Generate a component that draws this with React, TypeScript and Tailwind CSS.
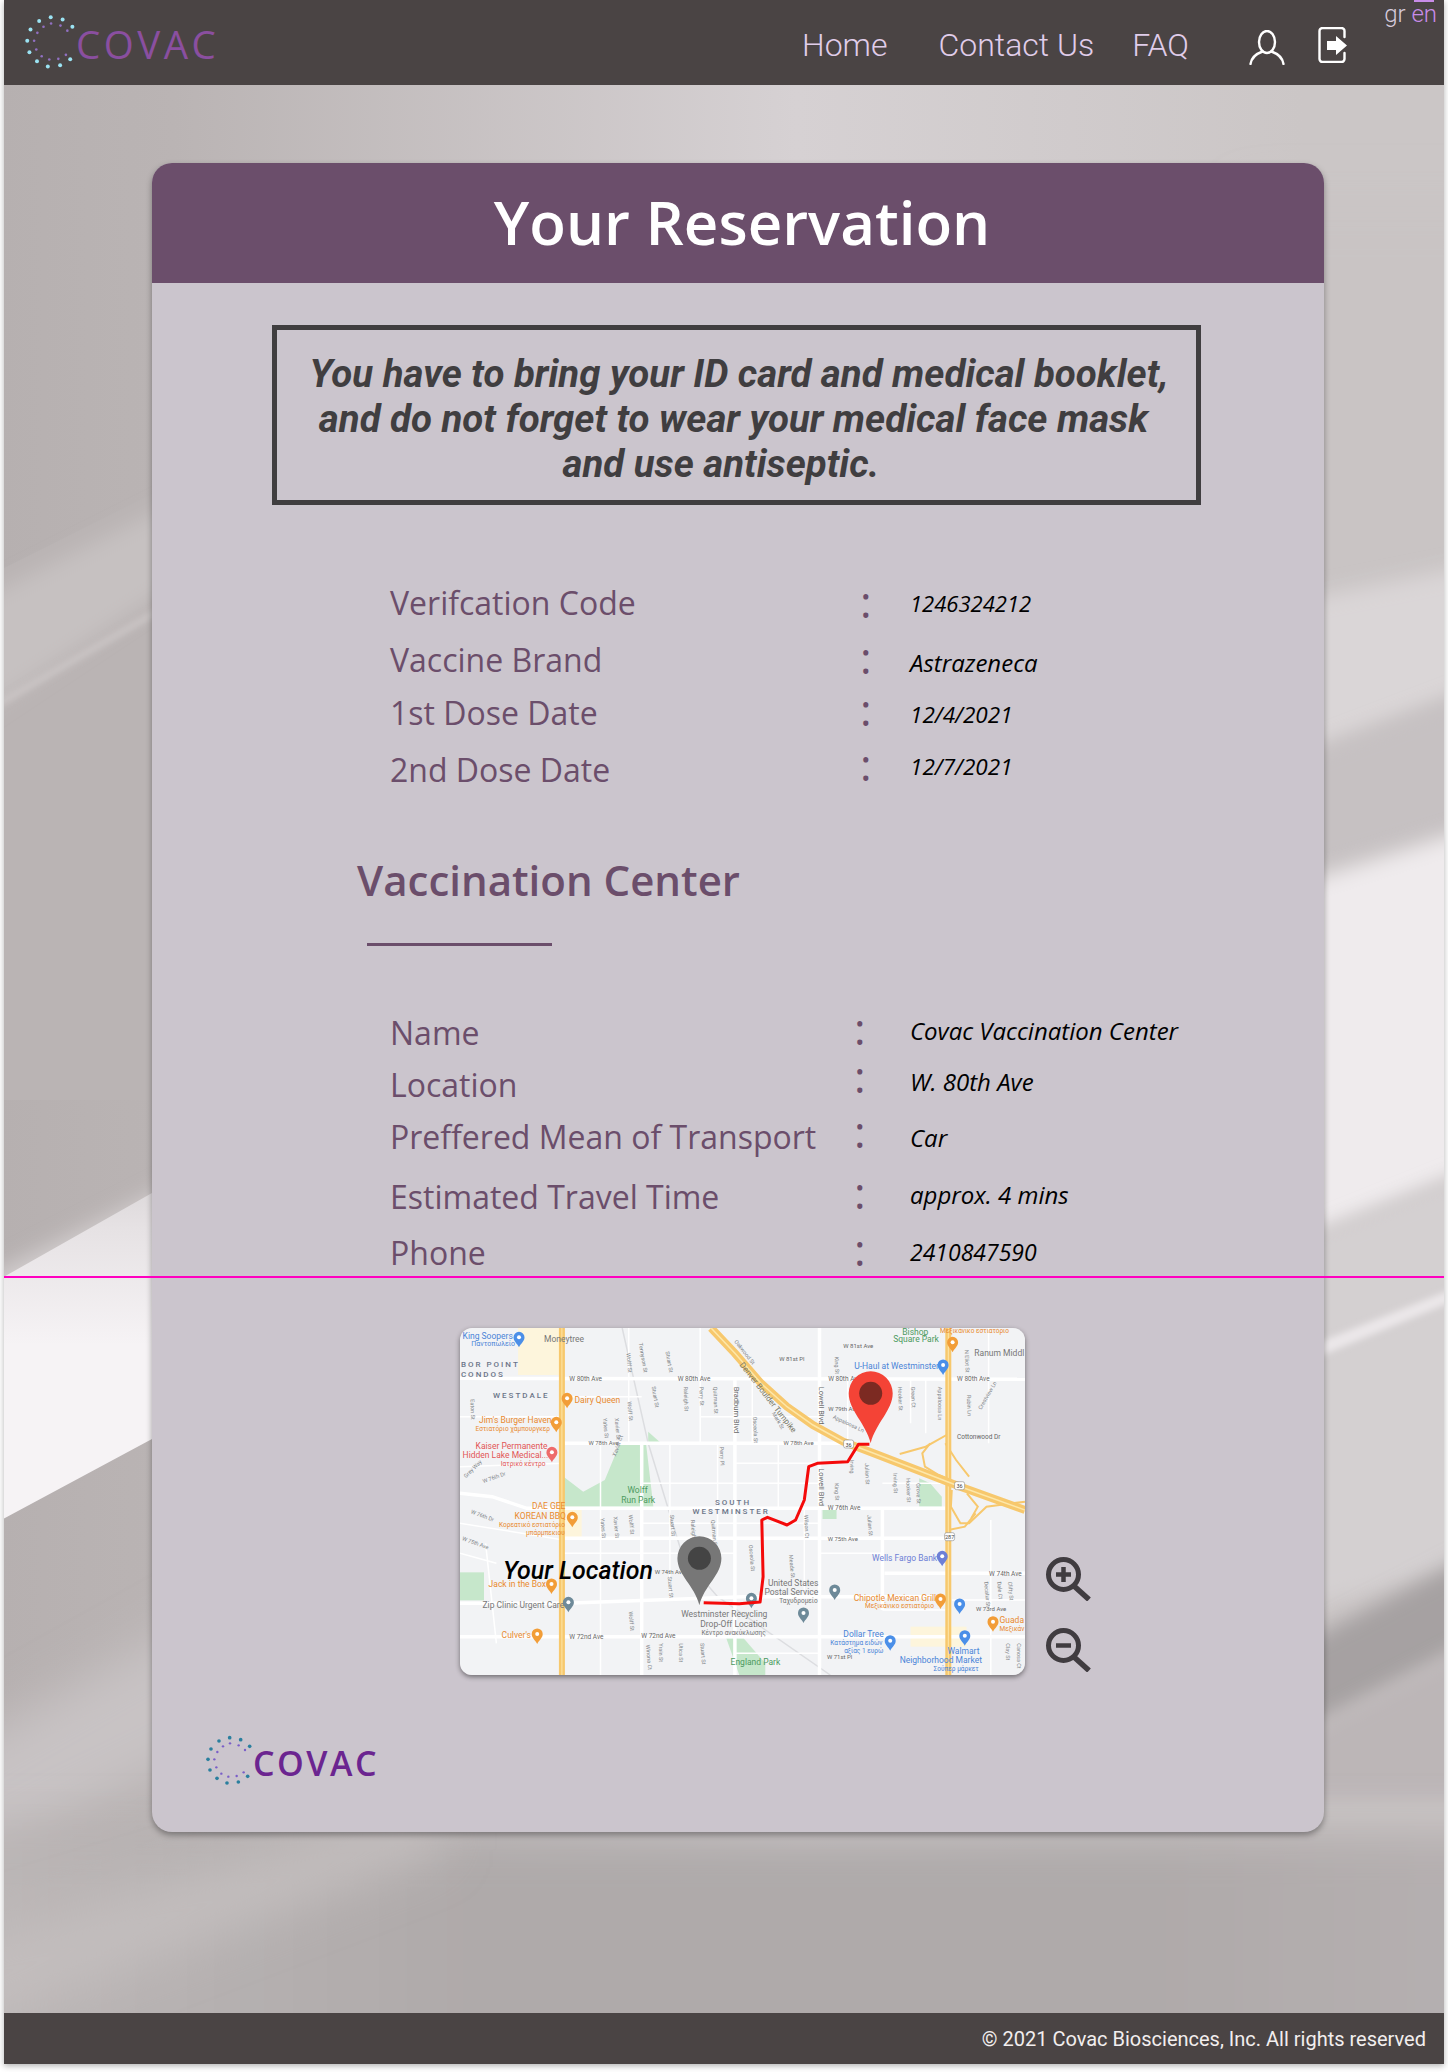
import React from 'react'

const X = (z: number) => (z - 46) / 2.306
const Y = (z: number) => (z - 54) / 3
const line = (pts: number[][]) => pts.map((p, i) => `${i ? 'L' : 'M'}${X(p[0]).toFixed(1)} ${Y(p[1]).toFixed(1)}`).join(' ')

const outerDots = [[269,116],[302,122],[329,142],[237,126],[213,150],[204,181],[210,213],[231,238],[261,252],[295,249],[323,232]]
const innerDots = [[270,133],[296,139],[315,153],[249,142],[232,159],[223,181],[229,205],[244,224],[265,233],[290,231],[311,220]]

const DotRing = ({ outer, inner, className }: { outer: string, inner: string, className: string }) => (
  <svg viewBox="195 108 144 150" className={className}>
    {outerDots.map((d, i) => <circle key={i} cx={d[0]} cy={d[1]} r="5.5" fill={outer} />)}
    {innerDots.map((d, i) => <circle key={i} cx={d[0]} cy={d[1]} r="3.6" fill={inner} />)}
  </svg>
)

const UserIcon = () => (
  <svg width="36" height="35" viewBox="0 0 36 35" fill="none" stroke="#fff" strokeWidth="2.4" strokeLinecap="round" className="mt-[10px]">
    <ellipse cx="18" cy="12" rx="8" ry="11" />
    <path d="M1.5 34C2.5 27 8 23.5 13.5 21.5M34.5 34C33.5 27 28 23.5 22.5 21.5" />
  </svg>
)

const ExitIcon = () => (
  <svg width="30" height="36" viewBox="0 0 30 36" fill="none" className="mt-[5px]">
    <path d="M26.5 10V4a3 3 0 0 0-3-3H4.500a3 3 0 0 0-3 3v28a3 3 0 0 0 3 3h19a3 3 0 0 0 3-3v-6" stroke="#fff" strokeWidth="2.4" strokeLinecap="round" />
    <path d="M9 14h9V9l11 9.500L18 28v-5H9z" fill="#fff" />
  </svg>
)

const ZoomIcon = ({ plus }: { plus?: boolean }) => (
  <svg width="46" height="44" viewBox="0 0 46 44" fill="none" stroke="#403c40" strokeWidth="5">
    <circle cx="18.500" cy="17.500" r="15" />
    <path d="M29 29l15 13.500" strokeWidth="5.500" />
    <path d={plus ? 'M11 17.500h15M18.500 10v15' : 'M11 17.500h15'} strokeWidth="4.500" />
  </svg>
)

const BackgroundArt = () => (
  <svg className="absolute inset-0 w-full h-full" viewBox="4 85 1440 1928" preserveAspectRatio="none">
    <defs>
      <linearGradient id="base" x1="0" y1="0" x2="1" y2="0">
        <stop offset="0" stopColor="#b6b0b0" />
        <stop offset="0.12" stopColor="#bab4b4" />
        <stop offset="0.55" stopColor="#d6d1d3" />
        <stop offset="0.9" stopColor="#cbc6c6" />
        <stop offset="1" stopColor="#cbc6c6" />
      </linearGradient>
      <linearGradient id="lower" x1="0" y1="0" x2="1" y2="0">
        <stop offset="0" stopColor="#bfbaba" />
        <stop offset="0.35" stopColor="#afaaaa" />
        <stop offset="0.75" stopColor="#afaaaa" />
        <stop offset="1" stopColor="#b8b2b3" />
      </linearGradient>
      <linearGradient id="band" x1="0" y1="0" x2="0" y2="1">
        <stop offset="0" stopColor="#c6c1c3" />
        <stop offset="0.3" stopColor="#e6e2e4" />
        <stop offset="0.55" stopColor="#f6f3f5" />
        <stop offset="1" stopColor="#f6f3f5" />
      </linearGradient>
      <filter id="b3" x="-30%" y="-30%" width="160%" height="160%"><feGaussianBlur stdDeviation="3" /></filter>
      <filter id="b10" x="-30%" y="-30%" width="160%" height="160%"><feGaussianBlur stdDeviation="10" /></filter>
      <filter id="b24" x="-30%" y="-30%" width="160%" height="160%"><feGaussianBlur stdDeviation="24" /></filter>
    </defs>
    <rect x="0" y="85" width="1448" height="1928" fill="url(#base)" />
    <path d="M-60 600L300 420V1100H-60z" fill="#bab4b4" />
    <path d="M-60 620L300 440V500L-60 740z" fill="#c6c1c1" filter="url(#b10)" />
    <path d="M-60 735L300 525L300 531L-60 741z" fill="#cdc8c8" filter="url(#b3)" />
    <path d="M-60 1300L300 1120V1180L-60 1350z" fill="#d2cdce" filter="url(#b10)" />
    <path d="M-60 1760L300 1560V1700L-60 1880z" fill="#c8c3c4" filter="url(#b24)" />
    <path d="M-60 1313L152 1193L420 1090V1300L152 1439L-60 1553z" fill="url(#band)" />
    <path d="M1250 200H1500V600L1250 660z" fill="#c9c4c4" filter="url(#b24)" />
    <path d="M1250 610L1500 560V680L1250 775z" fill="#dad6d7" filter="url(#b10)" />
    <path d="M1250 775L1500 680V820L1250 890z" fill="#c6c1c2" filter="url(#b10)" />
    <path d="M1250 900L1500 820L1500 1160L1250 1260z" fill="#efebed" filter="url(#b10)" />
    <path d="M1250 1260L1500 1160V1560L1250 1620z" fill="#d4d0d1" filter="url(#b10)" />
    <path d="M1250 1370L1500 1270V1282L1250 1385z" fill="#ebe7e9" filter="url(#b3)" />
    <path d="M1250 1670L1500 1540V1630L1250 1760z" fill="#a6a1a2" filter="url(#b10)" />
    <path d="M1250 1760L1500 1630V1800H1250z" fill="#bcb6b7" filter="url(#b10)" />
    <rect x="-150" y="1830" width="1750" height="350" fill="url(#lower)" filter="url(#b24)" />
    <path d="M-60 1950L440 1800V1850L-60 2040z" fill="#c2bdbd" filter="url(#b24)" />
  </svg>
)

const thinRoads = [
  [[370,400],[370,1095]], [[435,54],[435,400]], [[530,400],[530,860]], [[600,54],[600,400]], [[640,400],[640,690]],
  [[720,205],[720,400]], [[780,400],[780,595]], [[840,595],[840,860]], [[940,205],[940,400]], [[1085,205],[1085,340]],
  [[1120,205],[1120,370]], [[1265,54],[1265,400]], [[1270,630],[1270,1095]], [[285,260],[465,260]], [[600,320],[875,320]],
  [[680,460],[875,460]], [[465,520],[875,520]], [[465,640],[875,640]], [[875,730],[1020,730]], [[285,730],[680,730]],
  [[680,1030],[875,1030]], [[1020,520],[1165,520]], [[1180,870],[1349,870]], [[46,640],[285,690]], [[46,730],[130,760]],
  [[1020,900],[1165,900]], [[285,460],[46,470]], [[46,320],[285,320]], [[105,700],[130,1000]],
]

const mainRoads = [
  [[46,205],[1349,208]], [[285,400],[930,400]], [[46,550],[120,560],[200,595],[1165,595]], [[285,685],[1165,685]],
  [[1025,790],[1349,790]], [[46,880],[290,880],[700,860],[1165,860]], [[46,980],[1349,980]], [[875,54],[875,1095]],
  [[680,205],[680,1095]], [[465,400],[465,1095]], [[1020,595],[1020,900]],
]

type MapLabel = [number, number, string, string, number?]

const mapLabels: MapLabel[] = [
  [52,86,'King Soopers','#4a84d8'], [72,108,'Παντοπωλείο','#4a84d8',7], [240,95,'Moneytree','#777'],
  [48,170,'BOR POINT','#6b7588',8], [48,200,'CONDOS','#6b7588',8], [122,265,'WESTDALE','#6b7588',8],
  [310,280,'Dairy Queen','#e98a2f'], [90,340,'Jim\'s Burger Haven','#e98a2f'], [82,362,'Εστιατόριο χάμπουργκερ','#e98a2f',6.500],
  [82,418,'Kaiser Permanente','#e25555'], [52,445,'Hidden Lake Medical...','#e25555'], [140,468,'Ιατρικό κέντρο','#e25555',6.500],
  [212,598,'DAE GEE','#e98a2f'], [172,626,'KOREAN BBQ','#e98a2f'], [136,650,'Κορεατικό εστιατόριο','#e98a2f',6.500], [198,674,'μπάρμπεκιου','#e98a2f',6.500],
  [432,550,'Wolff','#4c9a5e'], [418,578,'Run Park','#4c9a5e'], [634,584,'SOUTH','#6b7588',8], [582,612,'WESTMINSTER','#6b7588',8],
  [112,832,'Jack in the Box','#e98a2f'], [98,895,'Zip Clinic Urgent Care','#777'], [142,985,'Culver\'s','#e98a2f'],
  [556,922,'Westminster Recycling','#777'], [600,950,'Drop-Off Location','#777'], [603,974,'Κέντρο ανακύκλωσης','#777',6.500],
  [756,828,'United States','#777'], [748,856,'Postal Service','#777'], [782,880,'Ταχυδρομείο','#777',6.500],
  [954,872,'Chipotle Mexican Grill','#e98a2f'], [980,895,'Μεξικάνικο εστιατόριο','#e98a2f',6.500],
  [996,754,'Wells Fargo Bank','#6d7fd6'], [930,982,'Dollar Tree','#4a84d8'], [900,1005,'Κατάστημα ειδών','#4a84d8',6.500], [932,1028,'αξίας 1 ευρώ','#4a84d8',6.500],
  [1170,1032,'Walmart','#4a84d8'], [1060,1060,'Neighborhood Market','#4a84d8'], [1138,1084,'Σούπερ μάρκετ','#4a84d8',6.500],
  [670,1064,'England Park','#4c9a5e'], [955,178,'U-Haul at Westminster','#4a84d8'], [1232,138,'Ranum Middl','#777'],
  [1066,76,'Bishop','#4c9a5e'], [1045,96,'Square Park','#4c9a5e'], [1153,70,'Μεξικάνικο εστιατόριο','#e98a2f',6.500], [1290,938,'Guada','#e98a2f'], [1290,962,'Μεξικάν','#e98a2f',6.500],
  [298,214,'W 80th Ave','#666',6.500], [548,212,'W 80th Ave','#666',6.500], [895,212,'W 80th Ave','#666',6.500], [1192,214,'W 80th Ave','#666',6.500],
  [342,404,'W 78th Ave','#666',6], [792,406,'W 78th Ave','#666',6], [894,600,'W 76th Ave','#666',6.500], [894,692,'W 75th Ave','#666',6],
  [1266,797,'W 74th Ave','#666',6.500], [298,986,'W 72nd Ave','#666',6.500], [464,984,'W 72nd Ave','#666',6.500], [892,1046,'W 71st Pl','#666',6],
  [1192,386,'Cottonwood Dr','#666',6.500], [1236,902,'W 73rd Ave','#666',6], [495,792,'W 74th Ave','#666',6],
  [930,114,'W 81st Ave','#666',6], [782,154,'W 81st Pl','#666',6], [895,302,'W 79th Ave','#666',6],
]

// little street names that run along the roads: [x, y, name, rotation]
const streetLabels: [number, number, string, number][] = [
  [458,100,'Tennyson St',80], [520,125,'Stuart St',80], [488,230,'Stuart St',80], [562,230,'Raleigh St',88], [598,230,'Perry St',88],
  [630,230,'Quitman St',88], [430,130,'Wolff St',85], [432,275,'Wolff St',85], [403,325,'Xavier St',85], [376,325,'Yates St',85],
  [70,268,'Eaton St',88], [1056,230,'Hooker St',88], [1086,230,'Green Ct',88], [1148,230,'Appaloosa Ln',90], [1215,255,'Rubin Ln',88],
  [1248,300,'Crestview Ln',-60], [980,460,'Julian St',88], [945,450,'Irving',88], [910,520,'King St',88], [1045,490,'Irving St',88],
  [1075,505,'Hooker St',88], [1098,520,'Grove St',88], [645,410,'Perry Pl',88], [722,320,'Osceola St',88], [765,310,'Mark St',60],
  [840,615,'Wilson Ct',88], [805,735,'Meade St',85], [712,705,'Osceola St',85], [530,615,'Stuart St',85], [578,630,'Raleigh St',85],
  [625,630,'Quitman St',85], [370,625,'Yates St',85], [400,620,'Xavier St',85], [435,615,'Wolff St',85], [985,615,'Julian St',85],
  [435,905,'Wolff St',85], [525,800,'Stuart St',85], [552,1000,'Utica St',90], [505,1000,'Yrain St',90], [475,1005,'Winona Ct',85],
  [600,1000,'Stuart St',85], [910,140,'King St',88], [1210,120,'N Eliot St',88], [1255,815,'Decatur St',85], [1285,815,'Dale Ct',85],
  [1310,815,'Clifty St',85], [1305,1000,'Clay St',90], [1330,1000,'Canosa Ct',90], [678,95,'Oakwood St',52], [905,325,'Appaloosa Ln',25],
  [60,505,'Grey Way',-45], [100,520,'W 76th Dr',-20], [70,610,'W 76th Dr',20], [50,690,'W 75th Ave',20], [405,440,'Xavier Ct',-70],
]

const orange = [[293,268],[268,340],[305,625],[257,825],[224,975],[1182,100],[1154,870],[1275,938]]
const blue = [[182,85],[1160,168],[1198,885],[1210,980],[1038,995]]
const slate = [[296,880],[718,868],[910,843],[838,912]]

const Poi = ({ x, y, color }: { x: number, y: number, color: string }) => (
  <g transform={`translate(${X(x).toFixed(1)} ${Y(y).toFixed(1)})`}>
    <path d="M0 9C-2 5-5.500 3-5.500-1A5.500 5.500 0 1 1 5.500-1C5.500 3 2 5 0 9z" fill={color} />
    <circle cy="-1" r="2" fill="#fff" />
  </g>
)

const Pin = ({ x, y, tip, body, core }: { x: number, y: number, tip: number, body: string, core: string }) => (
  <g transform={`translate(${X(x).toFixed(1)} ${Y(y).toFixed(1)})`}>
    <path d={`M0 ${tip}C-5 ${tip - 20}-22 17-22 0A22 22 0 1 1 22 0C22 17 5 ${tip - 20} 0 ${tip}z`} fill={body} />
    <circle r="11.500" fill={core} />
  </g>
)

const MapArt = () => (
  <svg width="565" height="347" viewBox="0 0 565 347" className="block [font-family:'Roboto',sans-serif]">
    <rect width="565" height="347" fill="#f2f3f5" />
    <g fill="#fdf5dc">
      <rect x={X(180)} y="0" width="42" height="47" />
      <rect x={X(285)} y={Y(575)} width="18" height="37" />
      <rect x={X(1085)} y={Y(950)} width="56" height="20" />
    </g>
    <g fill="#c6e7cb">
      <path d={line([[285,590],[285,500],[330,545],[380,510],[415,400],[475,400],[492,590]]) + 'z'} />
      <path d={line([[480,400],[480,365],[510,400]]) + 'z'} />
      <rect x={X(882)} y={Y(600)} width="14" height="9" />
      <rect x={X(46)} y={Y(787)} width="24" height="28" />
      <path d={line([[660,985],[700,985],[750,1060],[750,1095],[690,1095]]) + 'z'} />
      <path d={line([[1105,505],[1130,520],[1157,560],[1157,590],[1105,590]]) + 'z'} />
    </g>
    <path d={line([[420,54],[480,400],[560,740],[640,860],[900,1095]])} fill="none" stroke="#dcdde0" strokeWidth="1.500" />
    <g fill="none" stroke="#ffffff" strokeWidth="1.500">
      {thinRoads.map((r, i) => <path key={i} d={line(r)} />)}
    </g>
    <g fill="none" stroke="#ffffff" strokeWidth="3.500">
      {mainRoads.map((r, i) => <path key={i} d={line(r)} />)}
    </g>
    <g fill="none" stroke="#f7c86d" strokeWidth="2">
      <path d={line([[1060,432],[1120,410],[1172,372]])} />
      <path d={line([[1130,400],[1112,430],[1118,470],[1150,495],[1178,510]])} />
      <path d={line([[1165,400],[1190,450],[1220,500]])} />
      <path d={line([[1180,540],[1178,590],[1200,640],[1220,640],[1260,590],[1349,575]])} />
      <path d={line([[1215,550],[1240,590],[1225,625]])} />
      <path d={line([[1172,660],[1210,650],[1235,610]])} />
    </g>
    <path d={line([[281,54],[281,1095]])} fill="none" stroke="#f7c86d" strokeWidth="6" />
    <path d={line([[281,54],[281,1095]])} fill="none" stroke="#fde7a9" strokeWidth="1" />
    <path d={line([[1172,54],[1172,1095]])} fill="none" stroke="#f7c86d" strokeWidth="6" />
    <path d={line([[1172,54],[1172,1095]])} fill="none" stroke="#fde7a9" strokeWidth="1" />
    <path d={line([[625,54],[680,130],[740,220],[800,290],[860,345],[930,395],[1000,430],[1100,480],[1200,530],[1349,600]])} fill="none" stroke="#f7c86d" strokeWidth="8" />
    <path d={line([[625,54],[680,130],[740,220],[800,290],[860,345],[930,395],[1000,430],[1100,480],[1200,530],[1349,600]])} fill="none" stroke="#fde7a9" strokeWidth="1.500" />
    {[[942,402,'36'],[1198,527,'36'],[1175,680,'287']].map((s, i) => (
      <g key={i} transform={`translate(${X(s[0] as number).toFixed(1)} ${Y(s[1] as number).toFixed(1)})`}>
        <rect x="-5" y="-4" width="10" height="8" rx="2" fill="#fff" stroke="#888" strokeWidth="0.6" />
        <text textAnchor="middle" y="2.500" fontSize="5.500" fill="#444">{s[2]}</text>
      </g>
    ))}
    {streetLabels.map((s, i) => (
      <text key={i} transform={`translate(${X(s[0]).toFixed(1)} ${Y(s[1]).toFixed(1)}) rotate(${s[3]})`} fontSize="5.500" fill="#808488">{s[2]}</text>
    ))}
    <text transform={`translate(${X(690).toFixed(1)} ${Y(165).toFixed(1)}) rotate(52)`} fontSize="8" fill="#776">Denver Boulder Turnpike</text>
    <text transform={`translate(${X(873).toFixed(1)} ${Y(230).toFixed(1)}) rotate(90)`} fontSize="7.500" fill="#666">Lowell Blvd</text>
    <text transform={`translate(${X(873).toFixed(1)} ${Y(475).toFixed(1)}) rotate(90)`} fontSize="7.500" fill="#666">Lowell Blvd</text>
    <text transform={`translate(${X(678).toFixed(1)} ${Y(230).toFixed(1)}) rotate(90)`} fontSize="7.500" fill="#666">Bradburn Blvd</text>
    <g fontSize="8.500">
      {mapLabels.map((l, i) => (
        <text key={i} x={X(l[0]).toFixed(1)} y={Y(l[1]).toFixed(1)} fill={l[3]} fontSize={l[4]}
          letterSpacing={l[3] === '#6b7588' ? 2 : undefined} fontWeight={l[3] === '#6b7588' ? 500 : undefined}>{l[2]}</text>
      ))}
    </g>
    {orange.map((p, i) => <Poi key={i} x={p[0]} y={p[1]} color="#f29d38" />)}
    {blue.map((p, i) => <Poi key={i} x={p[0]} y={p[1]} color="#4b8fe8" />)}
    {slate.map((p, i) => <Poi key={i} x={p[0]} y={p[1]} color="#6e8a99" />)}
    <Poi x={258} y={430} color="#ee6b6b" />
    <Poi x={1158} y={742} color="#6d7fd6" />
    <path d={line([[608,878],[690,881],[738,876],[745,800],[742,630],[755,622],[800,645],[820,630],[840,570],[850,470],[870,460],[940,455],[965,403],[990,403]])}
      fill="none" stroke="#f40a0a" strokeWidth="3" strokeLinejoin="round" />
    <Pin x={598} y={745} tip={47} body="#777777" core="#444444" />
    <Pin x={993} y={250} tip={50} body="#f44336" core="#7c2a22" />
    <text x={X(145)} y={Y(808)} fontSize="25" fontStyle="italic" fontWeight="500" fill="#000">Your Location</text>
  </svg>
)

type Row = { label: string, value: string, rowCls: string, colonCls: string, valueCls: string }

const firstRows: Row[] = [
  { label: 'Verifcation Code', value: '1246324212', rowCls: 'h-[54px]', colonCls: 'pb-[4px]', valueCls: 'text-[22px]' },
  { label: 'Vaccine Brand', value: 'Astrazeneca', rowCls: 'h-[60px]', colonCls: 'pb-[6px]', valueCls: 'text-[24px] pt-[6px]' },
  { label: '1st Dose Date', value: '12/4/2021', rowCls: 'h-[46px]', colonCls: 'pb-[8px]', valueCls: 'text-[22.5px] pt-[4px]' },
  { label: '2nd Dose Date', value: '12/7/2021', rowCls: 'h-[68px]', colonCls: 'pb-[12px] pr-[6px]', valueCls: 'text-[22.5px] pb-[6px]' },
]

const secondRows: Row[] = [
  { label: 'Name', value: 'Covac Vaccination Center', rowCls: 'h-[48px]', colonCls: 'pb-[8px]', valueCls: 'text-[24px] pb-[2px]' },
  { label: 'Location', value: 'W. 80th Ave', rowCls: 'h-[56px]', colonCls: 'pb-[16px]', valueCls: 'text-[24px] pb-[4px]' },
  { label: 'Preffered Mean of Transport', value: 'Car', rowCls: 'h-[48px]', colonCls: 'pb-[10px]', valueCls: 'text-[24px] pt-[4px]' },
  { label: 'Estimated Travel Time', value: 'approx. 4 mins', rowCls: 'h-[72px]', colonCls: 'pb-[8px]', valueCls: 'text-[24px] pb-[2px]' },
  { label: 'Phone', value: '2410847590', rowCls: 'h-[40px]', colonCls: 'pb-[6px]', valueCls: 'text-[23px]' },
]

const InfoRow = ({ row, labelCol, colonCol, labelCls }: { row: Row, labelCol: string, colonCol: string, labelCls: string }) => (
  <div className={`flex items-center ${row.rowCls}`}>
    <div className={`${labelCol} ${labelCls} shrink-0 text-[#6b4e6b] text-[32px] leading-none whitespace-nowrap`}>{row.label}</div>
    <div className={`${colonCol} shrink-0 text-[#6b4e6b] text-[44px] leading-[24px] ${row.colonCls}`}>:</div>
    <div className={`text-black italic leading-none whitespace-nowrap ${row.valueCls}`}>{row.value}</div>
  </div>
)

export default function App() {
  return (
    <div className="bg-white h-[2072px] px-[4px] pb-[8px] font-['Roboto',sans-serif]">
      <div className="relative h-[2064px] flex flex-col shadow-[0_2px_6px_rgba(0,0,0,0.3)]">
        <header className="relative z-10 h-[85px] shrink-0 bg-[#4a4444] flex items-center">
          <div className="flex items-center ml-[20px]">
            <DotRing outer="#9be3f3" inner="#9170c2" className="w-[52px] h-[55px] -mt-[2px]" />
            <span className="mt-[4px] [font-family:'Open_Sans',sans-serif] font-medium text-[38.500px] leading-none tracking-[3.500px] text-[#8a4fa0]">COVAC</span>
          </div>
          <nav className="ml-auto mr-[96px] flex items-center font-light text-[32px] text-[#e0cdea] leading-none">
            <span className="mt-[5px]">Home</span>
            <span className="mt-[5px] ml-[51px]">Contact Us</span>
            <span className="mt-[5px] ml-[38px]">FAQ</span>
            <span className="ml-[60px]"><UserIcon /></span>
            <span className="ml-[33px]"><ExitIcon /></span>
          </nav>
          <div className="absolute right-[7px] top-[2px] text-[24px] font-light leading-[24px] text-[#d6cbdc] whitespace-nowrap">
            gr <span className="text-[#c88ce8]">en</span>
          </div>
          <div className="absolute right-[10px] top-0 w-[20px] h-[2px] bg-[#c88ce8]" />
        </header>

        <main className="relative flex-1 overflow-hidden pl-[148px]">
          <BackgroundArt />
          <section className="relative mt-[78px] w-[1172px] h-[1669px] rounded-[20px] bg-[#cbc5cd] shadow-[0_3px_6px_rgba(0,0,0,0.35)] overflow-hidden [font-family:'Open_Sans',sans-serif]">
            <h1 className="h-[120px] pl-[8px] pb-[2px] bg-[#6b4e6b] flex items-center justify-center text-white text-[60px] font-semibold leading-none">Your Reservation</h1>

            <div className="mt-[42px] ml-[120px] w-[929px] h-[180px] pt-[6px] border-[5px] border-[#403e40] flex flex-col justify-center font-['Roboto',sans-serif] italic font-bold text-[38.400px] leading-[45px] text-[#403e40] text-center whitespace-nowrap">
              <div className="pl-[5px]">You have to bring your ID card and medical booklet,</div>
              <div className="pr-[6px]">and do not forget to wear your medical face mask</div>
              <div className="pr-[31px]">and use antiseptic.</div>
            </div>

            <div className="mt-[71px] ml-[238px]">
              {firstRows.map((r) => <InfoRow key={r.label} row={r} labelCol="w-[470px]" colonCol="w-[50px]" labelCls="" />)}
            </div>

            <h2 className="mt-[46px] ml-[205px] h-[60px] flex items-center text-[#6b4e6b] text-[42px] font-semibold leading-none">Vaccination Center</h2>
            <div className="mt-[33px] ml-[215px] w-[185px] h-[3px] bg-[#6b4e6b]" />

            <div className="mt-[62px] ml-[238px]">
              {secondRows.map((r) => <InfoRow key={r.label} row={r} labelCol="w-[464px]" colonCol="w-[56px]" labelCls="pt-[2px]" />)}
            </div>

            <div className="mt-[56px] ml-[308px] flex items-end gap-[20px]">
              <div className="w-[565px] h-[347px] rounded-[12px] overflow-hidden shadow-[0_2px_5px_rgba(0,0,0,0.45)]">
                <MapArt />
              </div>
              <div className="flex flex-col gap-[27px] pb-[3px]">
                <ZoomIcon plus />
                <ZoomIcon />
              </div>
            </div>

            <div className="mt-[60px] ml-[53px] flex items-end">
              <DotRing outer="#2a7f9e" inner="#7a5fc8" className="w-[48px] h-[50px]" />
              <span className="mb-[5px] text-[34px] font-semibold leading-none tracking-[2.500px] text-[#6b2590]">COVAC</span>
            </div>
          </section>
        </main>

        <footer className="relative z-10 h-[51px] shrink-0 bg-[#4a4444] flex items-center justify-end pr-[18px] text-[20px] text-[#f2eeee]">
          © 2021 Covac Biosciences, Inc. All rights reserved
        </footer>

        <div className="absolute z-20 left-0 right-0 top-[1276px] h-[2px] bg-[#ff00c0]" />
      </div>
    </div>
  )
}
